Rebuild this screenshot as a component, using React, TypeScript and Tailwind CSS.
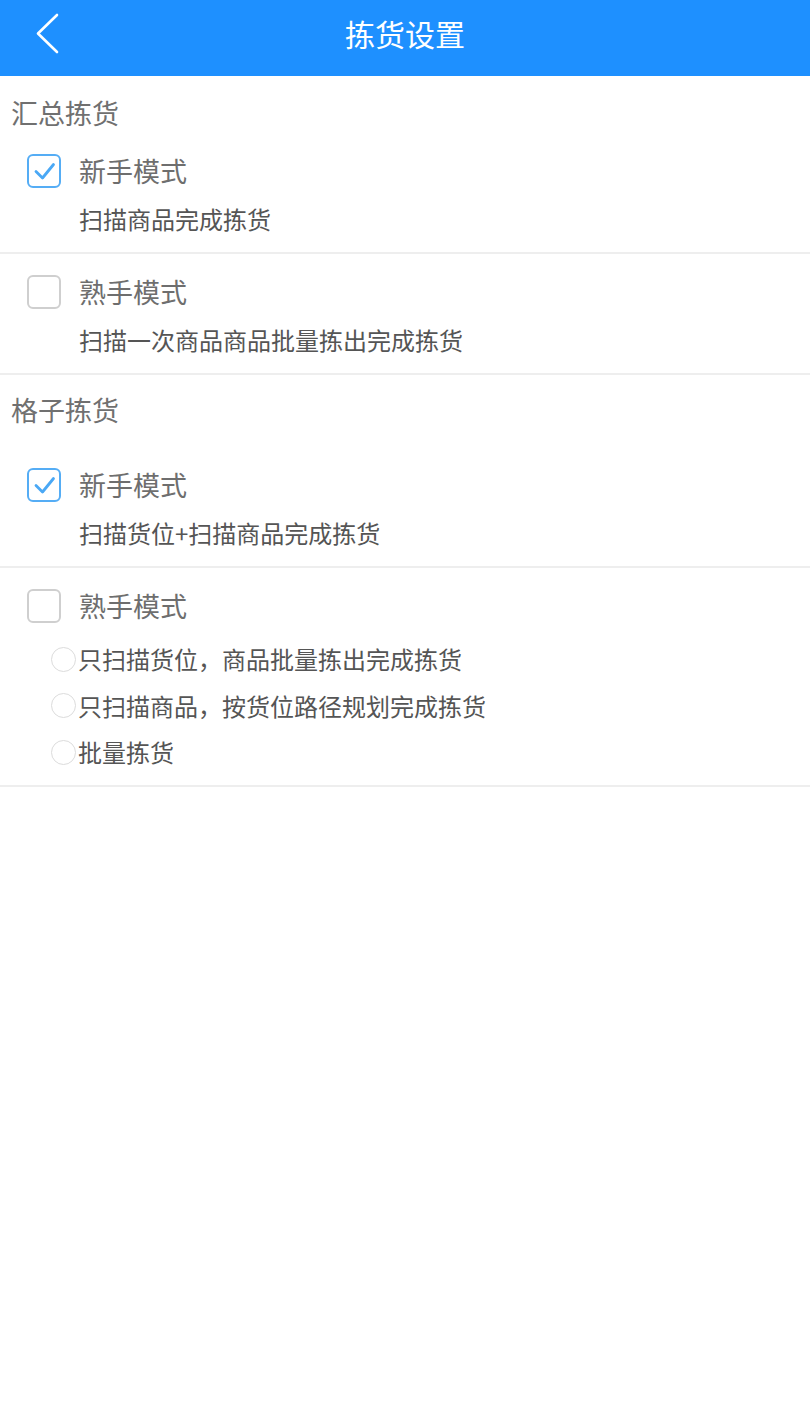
const FONT = { fontFamily: '"Noto Sans CJK SC", "Noto Sans", sans-serif' }

function Checkbox({ checked }: { checked: boolean }) {
  return (
    <span
      className={
        'flex h-[34px] w-[34px] shrink-0 items-center justify-center rounded-[6px] border-2 ' +
        (checked ? 'border-[#55adf5]' : 'border-[#cfcfcf]')
      }
    >
      {checked && (
        <svg width="24" height="24" viewBox="0 0 24 24" fill="none">
          <path d="M4 12.5l6.5 6.5L21.5 5.5" stroke="#4aa8f5" strokeWidth="2.8" strokeLinecap="round" strokeLinejoin="round" />
        </svg>
      )}
    </span>
  )
}

function ModeItem({
  label,
  desc,
  checked,
  top = 'pt-[18px]',
  children,
}: {
  label: string
  desc?: string
  checked: boolean
  top?: string
  children?: React.ReactNode
}) {
  return (
    <div className={'border-b-2 border-[#eeeeee] pb-4 ' + top}>
      <div className="flex h-10 items-center pl-[27px]">
        <Checkbox checked={checked} />
        <span className="ml-[18px] text-[27px] leading-10 text-[#6e6e6e]">{label}</span>
      </div>
      {desc && <p className="mt-[11px] pl-[79px] text-[24px] leading-[34px] text-[#555]">{desc}</p>}
      {children}
    </div>
  )
}

function RadioRow({ text }: { text: string }) {
  return (
    <div className="flex h-[46.5px] items-center pl-[51px]">
      <span className="h-[25px] w-[25px] shrink-0 rounded-full border-[1.5px] border-[#dcdcdc]" />
      <span className="ml-[2px] text-[24px] text-[#555]">{text}</span>
    </div>
  )
}

export default function App() {
  return (
    <div className="min-h-[1408px] w-[810px] bg-white" style={FONT}>
      <header className="relative flex h-[76px] items-center justify-center bg-[#1e90ff] pb-[10px]">
        <button type="button" className="absolute left-[30px] top-[12px]">
          <svg width="34" height="44" viewBox="0 0 34 44" fill="none">
            <path d="M27 3L8 21.5L27 40" stroke="white" strokeWidth="2.6" strokeLinecap="round" strokeLinejoin="round" />
          </svg>
        </button>
        <h1 className="text-[30px] font-normal text-white">拣货设置</h1>
      </header>

      <section>
        <h2 className="pl-[11px] pt-[17px] text-[27px] leading-10 text-[#707070]">汇总拣货</h2>
        <ModeItem label="新手模式" desc="扫描商品完成拣货" checked />
        <ModeItem label="熟手模式" desc="扫描一次商品商品批量拣出完成拣货" checked={false} />
      </section>

      <section>
        <h2 className="pl-[11px] pt-[15px] text-[27px] leading-10 text-[#707070]">格子拣货</h2>
        <ModeItem label="新手模式" desc="扫描货位+扫描商品完成拣货" checked top="pt-[35px]" />
        <div className="border-b-2 border-[#eeeeee] pb-[9px] pt-[18px]">
          <div className="flex h-10 items-center pl-[27px]">
            <Checkbox checked={false} />
            <span className="ml-[18px] text-[27px] leading-10 text-[#6e6e6e]">熟手模式</span>
          </div>
          <div className="mt-[10px]">
            <RadioRow text="只扫描货位，商品批量拣出完成拣货" />
            <RadioRow text="只扫描商品，按货位路径规划完成拣货" />
            <RadioRow text="批量拣货" />
          </div>
        </div>
      </section>
    </div>
  )
}
